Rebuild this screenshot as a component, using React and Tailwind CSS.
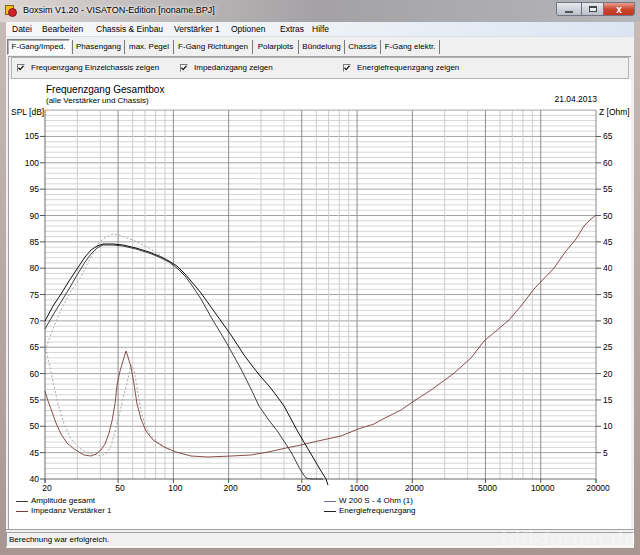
import React from 'react';

const X = (f) => 44 + 183.67 * Math.log10(f / 20);
const Y = (db) => 480 - (db - 40) * 5.27;
const pts = (a) => a.map(([x, y]) => `${x},${y}`).join(' ');

const freqs = [];
for (const d of [10, 100, 1000, 10000]) {
  for (let m = 1; m < 10; m++) {
    const f = d * m;
    if (f > 20 && f < 20000) freqs.push(f);
  }
}
const majorF = [50, 100, 200, 500, 1000, 2000, 5000, 10000];
const xLabels = [20, 50, 100, 200, 500, 1000, 2000, 5000, 10000, 20000];

// curves traced in page pixels
const ampA = [
  [44, 322], [52, 307], [60, 295], [68, 282], [76, 270], [84, 258], [90, 251], [96, 247], [102, 245],
  [112, 245], [122, 246], [135, 249], [148, 253], [158, 257], [168, 262], [176, 267], [184, 275],
  [190, 282], [200, 294], [210, 308], [220, 322], [230, 336], [243, 356], [252, 368], [260, 378],
  [268, 387], [275, 396], [283, 407], [297, 433], [310, 455], [320, 472], [325, 480], [327, 486],
];
const ampB = [
  [44, 330], [52, 316], [60, 303], [68, 290], [76, 276], [84, 263], [90, 255], [96, 249], [102, 246],
  [112, 246], [122, 247], [135, 250], [148, 254], [158, 258], [168, 263], [176, 269], [184, 277],
  [190, 285], [200, 300], [210, 318], [225, 343], [240, 370], [250, 390], [258, 407], [267, 420],
  [277, 433], [290, 453], [300, 472], [305, 479], [310, 480], [322, 480],
];
const ampChassis = [
  [44, 352], [50, 335], [56, 320], [63, 305], [70, 292], [80, 278], [88, 262], [93, 253], [98, 244],
  [102, 240], [107, 237], [112, 235], [118, 236], [123, 238], [132, 241], [140, 245], [150, 250],
  [163, 259], [173, 267],
];
const imp = [
  [44, 392], [47, 402], [50, 410], [55, 424], [60, 435], [66, 444], [73, 450], [83, 456], [90, 457],
  [95, 455], [100, 451], [104, 445], [108, 434], [111, 422], [114, 405], [116, 386], [119, 372],
  [122, 362], [125, 352], [127, 358], [130, 368], [133, 385], [136, 405], [140, 420], [145, 432],
  [152, 441], [163, 448], [175, 453], [190, 457], [207, 458], [230, 457], [250, 456], [267, 453],
  [285, 449], [300, 446], [317, 442], [340, 437], [357, 430], [373, 425], [380, 421], [400, 411],
  [413, 402], [430, 391], [452, 375], [470, 359], [483, 342], [495, 332], [508, 321], [520, 307],
  [533, 290], [553, 269], [565, 252], [575, 240], [583, 227], [590, 220], [595, 216],
];
const impChassis = [
  [44, 345], [47, 360], [51, 378], [57, 405], [63, 425], [70, 440], [78, 449], [87, 454], [100, 457],
  [106, 454], [110, 447], [114, 433], [118, 417], [122, 400], [127, 380], [130, 366], [133, 370],
  [136, 388], [140, 413], [145, 428], [150, 437], [158, 444], [168, 450],
];

function Chart() {
  const h = [];
  for (let k = 1; k < 70; k++) h.push(k);
  return (
    <svg width="623" height="388" viewBox="8 108 623 388" className="block" fontFamily="Liberation Sans, sans-serif" fontSize="8.5">
      {h.map((k) => (
        <line key={'h' + k} x1="44" x2="595" y1={Y(40 + k)} y2={Y(40 + k)} stroke={k % 5 === 0 ? '#a3a3a3' : '#d6d6d6'} strokeWidth="1" />
      ))}
      {freqs.map((f) => (
        <line key={'v' + f} x1={X(f)} x2={X(f)} y1={Y(110)} y2="480" stroke={majorF.includes(f) ? '#8c8c8c' : '#cdcdcd'} strokeWidth="1" />
      ))}
      <line x1="44" x2="595" y1={Y(110)} y2={Y(110)} stroke="#a3a3a3" />
      <line x1="44" x2="595" y1="480" y2="480" stroke="#6a6a6a" />
      <line x1="44" x2="44" y1={Y(110)} y2="484" stroke="#6a6a6a" />
      <line x1="595" x2="595" y1={Y(110)} y2="484" stroke="#8a8a8a" />

      <text x="10" y="116">SPL [dB]</text>
      <text x="598" y="116">Z [Ohm]</text>
      {[40, 45, 50, 55, 60, 65, 70, 75, 80, 85, 90, 95, 100, 105].map((d) => (
        <g key={'l' + d}>
          <line x1="39" x2="44" y1={Y(d)} y2={Y(d)} stroke="#555" />
          <text x="38" y={Y(d) + 3} textAnchor="end">{d}</text>
        </g>
      ))}
      {[5, 10, 15, 20, 25, 30, 35, 40, 45, 50, 55, 60, 65].map((z) => (
        <g key={'r' + z}>
          <line x1="595" x2="600" y1={Y(40 + z)} y2={Y(40 + z)} stroke="#555" />
          <text x="602" y={Y(40 + z) + 3}>{z}</text>
        </g>
      ))}
      {xLabels.map((f) => (
        <g key={'x' + f}>
          <line x1={X(f)} x2={X(f)} y1="480" y2="484" stroke="#555" />
          <text x={X(f) + 2} y="492" textAnchor="middle">{f}</text>
        </g>
      ))}

      <polyline points={pts(impChassis)} fill="none" stroke="#a8a8a8" strokeDasharray="2 2" />
      <polyline points={pts(ampChassis)} fill="none" stroke="#a8a8a8" strokeDasharray="2 2" />
      <polyline points={pts(imp)} fill="none" stroke="#7c3a3a" strokeWidth="0.9" />
      <polyline points={pts(ampB)} fill="none" stroke="#2a2a2a" strokeWidth="0.9" />
      <polyline points={pts(ampA)} fill="none" stroke="#111" strokeWidth="1" />
    </svg>
  );
}

function Check({ label }) {
  return (
    <div className="flex items-center gap-[6px]">
      <span className="w-[8px] h-[8px] bg-white border border-t-[#7a7a7a] border-l-[#7a7a7a] border-b-[#e8e8e8] border-r-[#e8e8e8] flex items-center justify-center">
        <svg width="6" height="6" viewBox="0 0 6 6">
          <path d="M0.5 2.8 L2.2 4.6 L5.5 0.8" fill="none" stroke="#111" strokeWidth="1.3" />
        </svg>
      </span>
      <span>{label}</span>
    </div>
  );
}

const menus = [
  ['Datei', 'w-[30px]'],
  ['Bearbeiten', 'w-[54px]'],
  ['Chassis & Einbau', 'w-[78px]'],
  ['Verstärker 1', 'w-[57px]'],
  ['Optionen', 'w-[49px]'],
  ['Extras', 'w-[32px]'],
  ['Hilfe', 'w-[30px]'],
];

const tabs = [
  ['Phasengang', 'w-[52px]'],
  ['max. Pegel', 'w-[49px]'],
  ['F-Gang Richtungen', 'w-[79px]'],
  ['Polarplots', 'w-[46px]'],
  ['Bündelung', 'w-[46px]'],
  ['Chassis', 'w-[36px]'],
  ['F-Gang elektr.', 'w-[59px]'],
];

export default function App() {
  return (
    <div className="w-[640px] h-[555px] relative overflow-hidden flex flex-col bg-gradient-to-b from-[#c9bcb8] to-[#a89692] font-['Liberation_Sans',sans-serif] text-black">
      {/* title bar */}
      <div className="h-[22px] flex items-start bg-gradient-to-r from-[#ddd6d4] via-[#a3a1a4] to-[#b5b6bb] relative">
        <div className="flex items-center h-[22px] pl-[5px] gap-[6px]">
          <svg width="12" height="12" viewBox="0 0 12 12">
            <rect x="0.5" y="0.5" width="8" height="9" fill="#f2c21b" stroke="#6b4a10" strokeWidth="0.8" />
            <circle cx="7.5" cy="7.5" r="4" fill="#d4202a" stroke="#6a0f10" strokeWidth="0.8" />
          </svg>
          <span className="text-[9px] [text-shadow:0_0_5px_#fff,0_0_3px_#fff]">Boxsim V1.20 - VISATON-Edition [noname.BPJ]</span>
        </div>
        <div className="ml-auto mr-[5px] mt-[2px] flex h-[14px] rounded-b-[3px] border border-[#6f7480] overflow-hidden">
          <div className="w-[25px] bg-gradient-to-b from-[#e6e9ee] to-[#b9bfc9] border-r border-[#6f7480] flex items-center justify-center">
            <span className="w-[8px] h-[2px] bg-white border border-[#555] mt-[5px]" />
          </div>
          <div className="w-[22px] bg-gradient-to-b from-[#e6e9ee] to-[#b9bfc9] border-r border-[#6f7480] flex items-center justify-center">
            <span className="w-[8px] h-[6px] border border-[#444] border-t-2 bg-white/60" />
          </div>
          <div className="w-[30px] bg-gradient-to-b from-[#e7a08e] via-[#c9462f] to-[#c2351f] flex items-center justify-center text-white text-[10px] font-bold">
            x
          </div>
        </div>
      </div>

      {/* client */}
      <div className="flex-1 mx-[6px] flex flex-col bg-[#f0f0f0]">
        <div className="h-[15px] flex items-center pl-[6px] text-[8.5px] bg-gradient-to-r from-[#f6f7f9] via-[#eef2f7] to-[#dbe5f2] border-b border-[#d9e0ea]">
          {menus.map(([m, w]) => (
            <span key={m} className={w}>{m}</span>
          ))}
        </div>

        <div className="h-[19px] flex items-center pl-[1px] text-[8px]">
          <div className="w-[63px] h-[16px] flex items-center justify-center bg-[#fafafa] border border-t-[#7d7d7d] border-l-[#7d7d7d] border-b-[#ffffff] border-r-[#ffffff] shadow-[inset_1px_1px_0_#b0b0b0]">
            F-Gang/Imped.
          </div>
          <span className="w-[3px] h-[14px] border-r border-[#7a7a7a]" />
          {tabs.map(([t, w]) => (
            <span key={t} className={`${w} h-[14px] flex items-center justify-center border-r border-[#7a7a7a]`}>{t}</span>
          ))}
        </div>

        <div className="flex-1 ml-[2px] mr-[3px] flex flex-col border-l border-t border-[#a0a0a0]">
          <div className="h-[22px] mx-[2px] border border-[#b4b4b4] flex items-center text-[8px]">
            <div className="w-[168px] pl-[5px]"><Check label="Frequenzgang Einzelchassis zeigen" /></div>
            <div className="w-[163px]"><Check label="Impedanzgang zeigen" /></div>
            <div><Check label="Energiefrequenzgang zeigen" /></div>
          </div>

          <div className="flex-1 bg-white flex flex-col">
            <div className="h-[28px] flex justify-between">
              <div className="pl-[37px] pt-[5px]">
                <div className="text-[10px] leading-[12px]">Frequenzgang Gesamtbox</div>
                <div className="text-[8px] leading-[10px]">(alle Verstärker und Chassis)</div>
              </div>
              <div className="pr-[34px] pt-[14px] text-[8.5px]">21.04.2013</div>
            </div>
            <Chart />
            <div className="grid grid-cols-[315px_1fr] text-[8px] leading-[10px] pt-[1px]">
              <div className="pl-[7px]">
                <div className="flex items-center gap-[3px]"><span className="w-[12px] h-px bg-[#3a3a3a]" />Amplitude gesamt</div>
                <div className="flex items-center gap-[3px]"><span className="w-[12px] h-px bg-[#7c3a3a]" />Impedanz Verstärker 1</div>
              </div>
              <div>
                <div className="flex items-center gap-[3px]"><span className="w-[12px] h-px bg-[#6f6fa6]" />W 200 S - 4 Ohm (1)</div>
                <div className="flex items-center gap-[3px]"><span className="w-[12px] h-px bg-[#222]" />Energiefrequenzgang</div>
              </div>
            </div>
          </div>
        </div>

        <div className="h-[19px] flex items-end pb-[1px] border-t border-[#a0a0a0]">
          <div className="flex-1 h-[15px] flex items-center pl-[2px] text-[8px] border border-t-[#a0a0a0] border-l-[#a0a0a0] border-b-white border-r-white">
            Berechnung war erfolgreich.
          </div>
        </div>
      </div>
      <div className="h-[7px]" />

      <div className="absolute right-[4px] bottom-[1px] text-[21px] font-bold text-white/30 tracking-[0.5px]">hifi-forum.de</div>
    </div>
  );
}
